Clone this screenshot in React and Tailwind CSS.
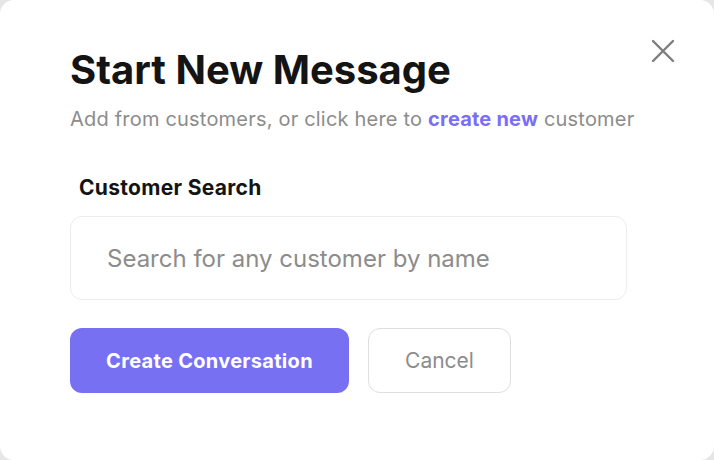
import React from "react";

const CloseIcon = () => (
  <svg width="24" height="24" viewBox="0 0 24 24" fill="none">
    <path d="M2 2L22 22M22 2L2 22" stroke="#7d7d7d" strokeWidth="2.4" strokeLinecap="round" />
  </svg>
);

export default function App() {
  return (
    <div className="w-[714px] h-[460px] bg-[#e6e6e6]" style={{ fontFamily: "Inter, 'Liberation Sans', sans-serif" }}>
      <div className="relative w-full h-full bg-white rounded-[14px] pt-[46px] pl-[70px]">
        <button className="absolute top-[39px] right-[39px]">
          <CloseIcon />
        </button>

        <h1 className="text-[40px] leading-[48px] font-bold text-[#141414]">
          Start New Message
        </h1>
        <p className="mt-[13px] text-[20px] leading-[24px] tracking-[0.2px] text-[#8c8c8c]">
          Add from customers, or click here to{" "}
          <a href="#" className="font-bold text-[#7a6ef6]">create new</a> customer
        </p>

        <label className="block mt-[45px] ml-[9px] text-[21px] leading-[24px] tracking-[0.3px] font-bold text-[#141414]">
          Customer Search
        </label>
        <input
          type="text"
          placeholder="Search for any customer by name"
          className="mt-[16px] w-[557px] h-[84px] rounded-[12px] border border-[#ececec] px-[36px] text-[24px] text-[#333] placeholder:text-[#8c8c8c] outline-none"
        />

        <div className="flex gap-[19px] mt-[28px]">
          <button className="w-[279px] h-[65px] rounded-[12px] bg-[#7870f3] text-white text-[20px] tracking-[0.3px] font-bold">
            Create Conversation
          </button>
          <button className="w-[143px] h-[65px] rounded-[12px] border border-[#dedede] bg-white text-[#8c8c8c] text-[21px]">
            Cancel
          </button>
        </div>
      </div>
    </div>
  );
}
